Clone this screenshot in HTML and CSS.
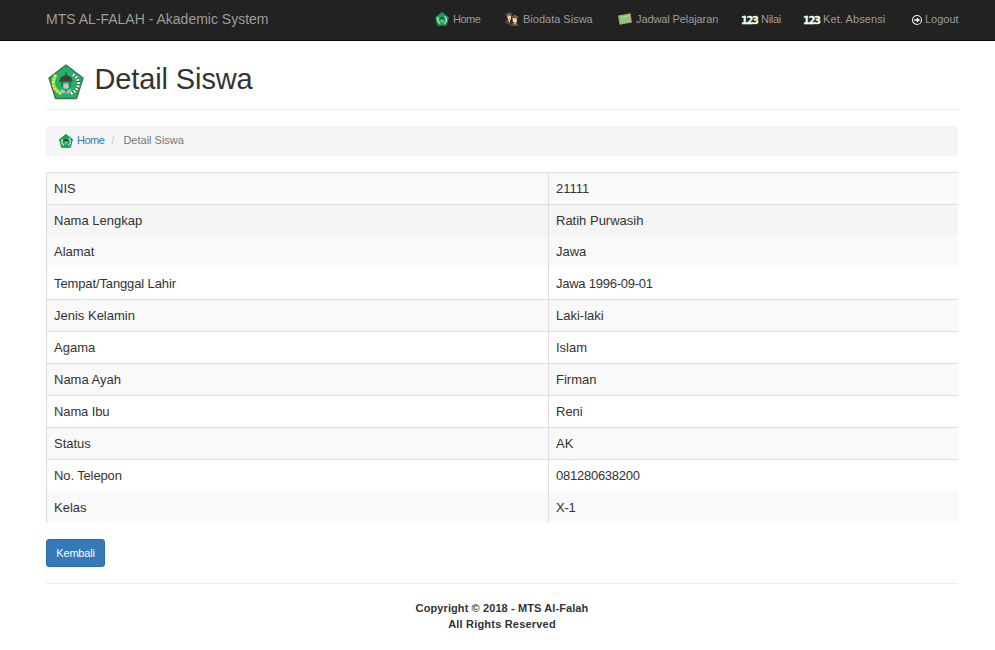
FILE: index.html
```html
<!DOCTYPE html>
<html lang="id">
<head>
<meta charset="utf-8">
<title>Detail Siswa</title>
<link rel="stylesheet" href="styles.css">
</head>
<body>
<svg width="0" height="0" class="defs" aria-hidden="true">
  <symbol id="crest" viewBox="0 0 36 36">
    <path d="M18 1 35 14 28.5 34.5h-21L1 14z" fill="#1db368" stroke="#4c6b50" stroke-width="1.4" stroke-linejoin="round"/>
    <path d="M8 11C2.500 19 6 27 14 29.500" fill="none" stroke="#d5e94e" stroke-width="3.400" stroke-dasharray="2.800 .5"/>
    <path d="M25 10.500C33.500 16 31.500 26 23 29.500" fill="none" stroke="#24632f" stroke-width="3.200"/>
    <path d="M25 10.500C33.500 16 31.500 26 23 29.500" fill="none" stroke="#fff" stroke-width="3" stroke-dasharray="1.900 1.300"/>
    <path d="M12 16c0-3 3-4 5.500-5V8h1v3C21 12 24 13 24 16z" fill="#39453a"/>
    <path d="M11.500 16h13v1.800h-13z" fill="#5b3b36"/>
    <path d="M14 18v5M22 18v5" stroke="#39453a" stroke-width="1"/>
    <circle cx="18" cy="22" r="2.800" fill="#bccbc3"/>
    <path d="M13 25l5 2 5-2v3.500L18 30l-5-1.500z" fill="#a9bdb0"/>
    <path d="M18 25v4.500" stroke="#46614f"/>
  </symbol>
  <symbol id="crest-small" viewBox="0 0 14 14">
    <path d="M7 .5 13.500 5.500 11.300 13.300H2.700L.5 5.500z" fill="#10a361" stroke="#1d8a51"/>
    <path d="M3.200 5C2 8 3 10 5 11.300" fill="none" stroke="#c6e75a" stroke-width="1.500"/>
    <path d="M9.800 4.500C12.500 7 11.500 10 9.500 11.300" fill="none" stroke="#e3f5e9" stroke-width="1.400" stroke-dasharray="1.500 .7"/>
    <path d="M4.500 7c.3-2.500 4.700-2.500 5 0z" fill="#203e2c"/>
    <path d="M5.700 7.500h2.800v3H5.700z" fill="#89aa96"/>
  </symbol>
  <symbol id="students" viewBox="0 0 14 14">
    <path d="M0 2.500 3.500 .5 8 1.500 5 4z" fill="#59595b"/>
    <path d="M1.500 3.300h4.500V8h-3z" fill="#c88e55"/><path d="M3 4h2.800v3.500H3z" fill="#f7d39c"/>
    <path d="M0 11c0-2 1-3.500 4-3.500L6.500 10 5 13z" fill="#454548"/><path d="M3 8h2l-.5 3z" fill="#e9e5dd"/>
    <path d="M5.500 5 9.500 2.800 14 5l-3 2z" fill="#626164"/>
    <path d="M7 6h5v4.500H8z" fill="#d18c4c"/><path d="M8 6.500h3.500V10H8z" fill="#fbd69b"/>
    <path d="M6 14c0-3 1.500-3.700 3.500-3.700S13.500 11 13.500 14z" fill="#55545a"/><path d="M9 10.300h2L10 13z" fill="#eee"/>
  </symbol>
  <symbol id="board" viewBox="0 0 14 12">
    <path d="M.7 3 12 1l1.300 8L2 11z" fill="#83c980" stroke="#c7a071" stroke-width="1.100"/>
    <path d="M2 4.500 11.300 2.800" stroke="#a9dda3"/>
  </symbol>
  <symbol id="logout" viewBox="0 0 12 12">
    <circle cx="6" cy="6" r="4.500" fill="none" stroke="#eee" stroke-width="1.100"/>
    <path d="M3.300 5.300h2.500V3.500L9 6 5.800 8.500V6.700H3.300z" fill="#fff"/>
  </symbol>
</svg>
<header class="navbar">
  <span class="brand">MTS AL-FALAH - Akademic System</span>
  <nav class="menu">
    <a class="tight"><svg class="icon"><use href="#crest-small"/></svg><span>Home</span></a>
    <a><svg class="icon"><use href="#students"/></svg><span>Biodata Siswa</span></a>
    <a class="snug"><svg class="icon"><use href="#board"/></svg><span>Jadwal Pelajaran</span></a>
    <a class="close"><b class="digits">123</b><span>Nilai</span></a>
    <a class="wide"><b class="digits">123</b><span>Ket. Absensi</span></a>
    <a class="logout"><svg class="icon"><use href="#logout"/></svg><span>Logout</span></a>
  </nav>
</header>
<main class="container">
  <div class="page-header">
    <svg class="logo"><use href="#crest"/></svg>
    <h1>Detail Siswa</h1>
  </div>
  <div class="breadcrumb">
    <svg class="icon"><use href="#crest-small"/></svg>
    <a>Home</a><span class="slash">/</span><span class="current">Detail Siswa</span>
  </div>
  <div class="table">
    <div class="row line odd"><span>NIS</span><span>21111</span></div>
    <div class="row line hover"><span>Nama Lengkap</span><span>Ratih Purwasih</span></div>
    <div class="row odd short"><span>Alamat</span><span>Jawa</span></div>
    <div class="row"><span class="dense">Tempat/Tanggal Lahir</span><span class="number">Jawa 1996-09-01</span></div>
    <div class="row line odd"><span>Jenis Kelamin</span><span>Laki-laki</span></div>
    <div class="row line"><span>Agama</span><span>Islam</span></div>
    <div class="row line odd"><span>Nama Ayah</span><span>Firman</span></div>
    <div class="row line"><span class="dense">Nama Ibu</span><span>Reni</span></div>
    <div class="row line odd"><span>Status</span><span>AK</span></div>
    <div class="row line"><span class="dense">No. Telepon</span><span class="number">081280638200</span></div>
    <div class="row odd"><span>Kelas</span><span class="number">X-1</span></div>
  </div>
  <a class="button">Kembali</a>
  <footer>Copyright © 2018 - MTS Al-Falah<br><span class="rights">All Rights Reserved</span></footer>
</main>
</body>
</html>
```
FILE: styles.css
```css
* { box-sizing: border-box; }
body { margin: 0; background: #fff; color: #333; font: 13px/18px "Liberation Sans", Arial, sans-serif; }
.defs { display: block; }
.navbar { height: 41px; padding: 0 37px 2px 46px; display: flex; align-items: center; justify-content: space-between; background: #222; border-bottom: 1px solid #080808; color: #9d9d9d; }
.brand { font-size: 14px; white-space: nowrap; }
.menu { display: grid; grid-template-columns: 70px 113px 123px 62px 108px 47px; font-size: 11px; white-space: nowrap; }
.menu a { display: flex; align-items: center; gap: 4px; height: 18px; }
.menu .tight { letter-spacing: -.5px; }
.menu .snug { letter-spacing: -.1px; }
.menu .close { letter-spacing: -.3px; }
.menu .wide { letter-spacing: .1px; }
.icon { width: 14px; height: 14px; flex: none; }
.logout .icon { width: 12px; height: 12px; margin-top: 1px; }
.menu .logout { gap: 2px; }
.digits { width: 16px; margin-top: 3px; font: bold 10px/12px "DejaVu Sans", sans-serif; letter-spacing: -1.4px; color: #e8ffe8; -webkit-text-stroke: .3px #e8ffe8; }
.container { width: 912px; margin-left: 46px; }
.page-header { height: 69px; display: flex; align-items: flex-start; border-bottom: 1px solid #eee; }
.logo { width: 36px; height: 36px; margin: 23px 11px 0 2px; }
h1 { margin: 21px 0 0 -.5px; font-size: 29px; font-weight: 400; line-height: 34px; letter-spacing: -.12px; }
.breadcrumb { display: flex; align-items: center; height: 30px; margin: 16px 0; padding-left: 13px; background: #f5f5f5; border-radius: 3px; font-size: 11px; }
.breadcrumb a, .breadcrumb span { position: relative; top: -1px; }
.breadcrumb a { margin-left: 4px; color: #337ab7; letter-spacing: -.5px; }
.slash { margin: 0 9px 0 7px; color: #ccc; }
.current { color: #777; }
.table { border-left: 1px solid #ddd; }
.row { display: grid; grid-template: 100% / 501px 1fr; height: 32px; }
.row span { padding-left: 7px; line-height: 31px; }
.row span + span { border-left: 1px solid #ddd; }
.row.line { border-top: 1px solid #ddd; }
.row:not(.line) span { padding-top: 1px; }
.odd { background: #f9f9f9; }
.hover { background: #f5f5f5; }
.row.short { height: 31px; }
.short span { line-height: 30px; }
.row .dense { letter-spacing: -.12px; }
.row .number { letter-spacing: -.25px; }
.button { display: flex; align-items: center; justify-content: center; width: 59px; height: 28px; margin-top: 16px; border: 1px solid #2e6da4; border-radius: 3px; background: #337ab7; color: #fff; font-size: 11px; letter-spacing: -.2px; }
footer { margin-top: 16px; padding-top: 16px; border-top: 1px solid #eee; text-align: center; font-size: 11px; font-weight: 700; line-height: 16px; letter-spacing: .1px; }
.rights { letter-spacing: .2px; }
```
